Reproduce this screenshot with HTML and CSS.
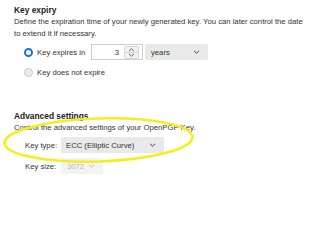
FILE: index.html
```
<!DOCTYPE html>
<html>
  <head>
    <title>Key settings</title>
    <link rel="stylesheet" href="styles.css">
  </head>
  <body>
    <div class="page">
      <div class="section">
        <h2>Key expiry</h2>
        <p class="desc">Define the expiration time of your newly generated key. You can later control the date to extend it if necessary.</p>
        <div class="options">
          <div class="option">
            <span class="radio checked"></span>
            <span class="option-label">Key expires in</span>
            <div class="number-box">
              <span class="number-value">3</span>
              <span class="stepper">
                <svg width="7" height="4" viewBox="0 0 7 4"><path d="M1 3.2 L3.5 0.8 L6 3.2" fill="none" stroke="#555" stroke-width="0.9"/></svg>
                <span class="stepper-line"></span>
                <svg width="7" height="4" viewBox="0 0 7 4"><path d="M1 0.8 L3.5 3.2 L6 0.8" fill="none" stroke="#555" stroke-width="0.9"/></svg>
              </span>
            </div>
            <div class="select select-years">
              <span>years</span>
              <svg class="chev" width="7" height="4" viewBox="0 0 7 4"><path d="M1 0.8 L3.5 3.2 L6 0.8" fill="none" stroke="#444" stroke-width="1"/></svg>
            </div>
          </div>
          <div class="option">
            <span class="radio"></span>
            <span class="option-label">Key does not expire</span>
          </div>
        </div>
      </div>

      <div class="section advanced">
        <h2>Advanced settings</h2>
        <p class="desc">Control the advanced settings of your OpenPGP Key.</p>
        <div class="fields">
          <div class="field">
            <span class="field-label">Key type:</span>
            <div class="select select-type">
              <span>ECC (Elliptic Curve)</span>
              <svg class="chev" width="7" height="4" viewBox="0 0 7 4"><path d="M1 0.8 L3.5 3.2 L6 0.8" fill="none" stroke="#444" stroke-width="1"/></svg>
            </div>
          </div>
          <div class="field">
            <span class="field-label">Key size:</span>
            <div class="select select-size disabled">
              <span>3072</span>
              <svg class="chev" width="7" height="4" viewBox="0 0 7 4"><path d="M1 0.8 L3.5 3.2 L6 0.8" fill="none" stroke="#bbb" stroke-width="1"/></svg>
            </div>
          </div>
        </div>
      </div>

      <svg class="highlight" width="320" height="240" viewBox="0 0 320 240">
        <ellipse cx="98.5" cy="140" rx="94" ry="21.5" transform="rotate(-1.8 98.5 140)" fill="none" stroke="#f4ef1c" stroke-width="2.6"/>
      </svg>
    </div>
  </body>
</html>
```

FILE: styles.css
```
body {
  margin: 0;
  font-family: "Liberation Sans", Arial, sans-serif;
  color: #333;
  background: #fff;
}

.page {
  position: relative;
  width: 320px;
  height: 240px;
  overflow: hidden;
  padding: 4px 12px 0 14px;
  box-sizing: border-box;
}

h2 {
  margin: 0;
  font-size: 8.4px;
  line-height: 12px;
  font-weight: bold;
  color: #222;
}

.desc {
  margin: 0;
  font-size: 7.7px;
  line-height: 12px;
  color: #333;
}

.options {
  display: flex;
  flex-direction: column;
  gap: 4px;
  margin-top: 4px;
  padding-left: 10px;
}

.option {
  display: flex;
  align-items: center;
  height: 16px;
  font-size: 7.7px;
}

.radio {
  flex: none;
  width: 9px;
  height: 9px;
  border-radius: 50%;
  box-sizing: border-box;
  border: 1px solid #c8c8c8;
  background: #ececec;
  margin-right: 4px;
}

.radio.checked {
  border: 2.6px solid #1370ef;
  background: #fff;
}

.option-label {
  min-width: 54px;
  white-space: nowrap;
}

.number-box {
  display: flex;
  align-items: center;
  justify-content: flex-end;
  width: 52px;
  height: 16px;
  box-sizing: border-box;
  border: 1px solid #cfcfcf;
  background: #fff;
  padding-right: 3px;
}

.number-value {
  margin-right: 5px;
}

.stepper {
  display: flex;
  flex-direction: column;
  align-items: center;
  justify-content: space-between;
  width: 15px;
  height: 13px;
  box-sizing: border-box;
  padding: 1px 0;
  background: #f2f2f2;
  border: 1px solid #d6d6d6;
  border-radius: 2px;
}

.stepper-line {
  width: 13px;
  height: 1px;
  background: #d6d6d6;
}

.select {
  display: flex;
  align-items: center;
  justify-content: space-between;
  height: 16px;
  box-sizing: border-box;
  background: #e9e9e9;
  border-radius: 2px;
  padding: 0 8px 0 6px;
  font-size: 7.7px;
  color: #333;
}

.select-years {
  width: 63px;
  margin-left: 2px;
}

.advanced {
  margin-top: 30px;
}

.fields {
  display: flex;
  flex-direction: column;
  gap: 5px;
  margin-top: 3px;
  padding-left: 11px;
}

.field {
  display: flex;
  align-items: center;
  font-size: 7.7px;
}

.field-label {
  width: 36px;
}

.select-type {
  width: 103px;
  padding-left: 5px;
}

.select-size {
  width: 42px;
  padding-left: 6px;
}

.select.disabled {
  background: #f3f3f3;
  color: #b8b8b8;
}

.highlight {
  position: absolute;
  left: 0;
  top: 0;
  pointer-events: none;
}
```
